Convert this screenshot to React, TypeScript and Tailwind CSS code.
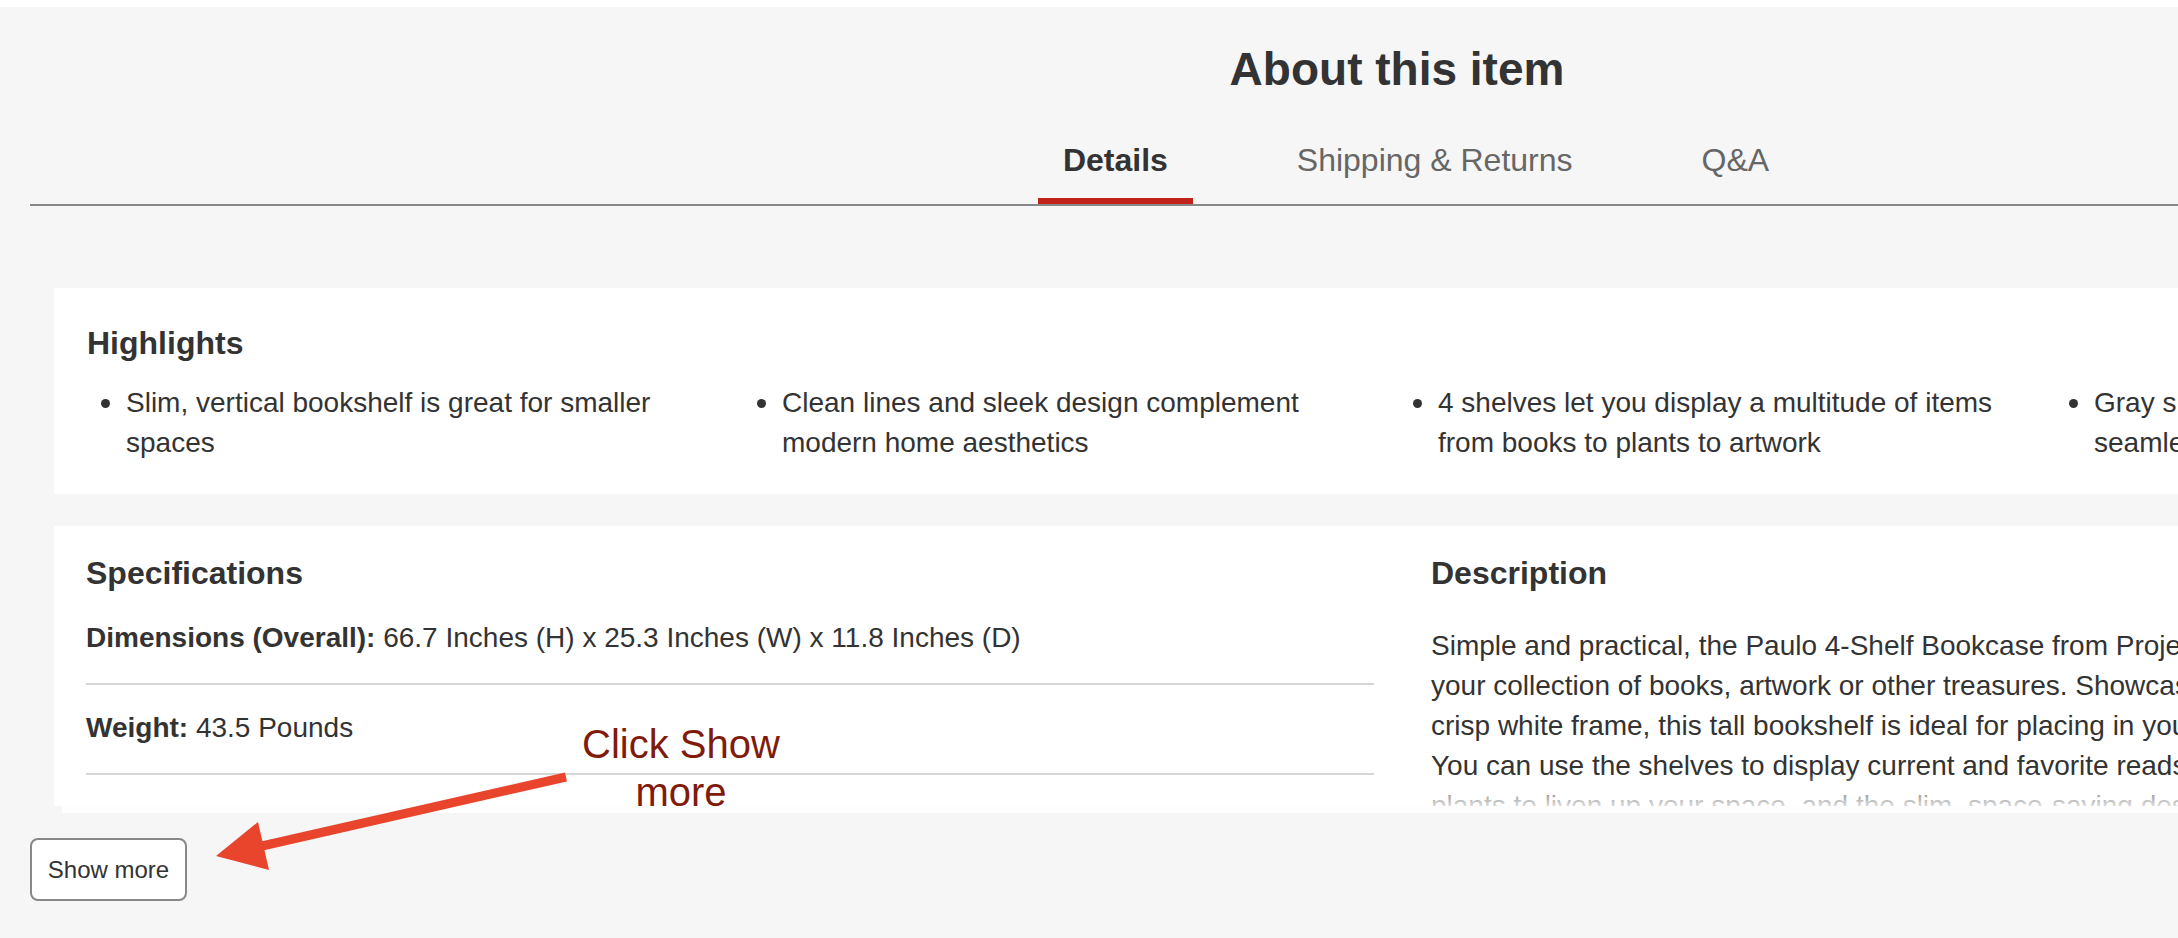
const highlights = [
  'Slim, vertical bookshelf is great for smaller spaces',
  'Clean lines and sleek design complement modern home aesthetics',
  '4 shelves let you display a multitude of items from books to plants to artwork',
  'Gray shelves and crisp white frame blend seamlessly with your décor',
];

const specs = [
  { label: 'Dimensions (Overall):', value: '66.7 Inches (H) x 25.3 Inches (W) x 11.8 Inches (D)' },
  { label: 'Weight:', value: '43.5 Pounds' },
];

const tabs = [
  { name: 'Details', active: true },
  { name: 'Shipping & Returns', active: false },
  { name: 'Q&A', active: false },
];

export default function App() {
  return (
    <div className="relative w-[2178px] h-[938px] overflow-hidden bg-white pt-[7px] font-['Liberation_Sans',Arial,sans-serif] text-[#333]">
      <div className="h-[931px] bg-[#f6f6f6] pl-[30px]">
        <div className="w-[2734px] pt-[34px]">
          {/* heading + tabs */}
          <h2 className="text-center text-[46px] leading-[56px] font-bold">About this item</h2>
          <div className="mt-[43px] flex justify-center gap-[79px] border-b-2 border-[#888] pl-[38px]">
            {tabs.map((t) => (
              <div
                key={t.name}
                className={
                  t.active
                    ? 'px-[25px] pb-[18px] border-b-[6px] border-[#c1231b] text-[32px] leading-[40px] font-bold text-[#333]'
                    : 'px-[25px] pb-[18px] border-b-[6px] border-transparent text-[32px] leading-[40px] text-[#666]'
                }
              >
                {t.name}
              </div>
            ))}
          </div>

          {/* Highlights */}
          <div className="mx-[24px] mt-[82px] bg-white pl-[33px] pt-[37px] pb-[31px]">
            <h3 className="text-[32px] leading-[36px] font-bold">Highlights</h3>
            <ul className="mt-[22px] grid grid-cols-[repeat(4,656px)]">
              {highlights.map((h) => (
                <li key={h} className="flex text-[28px] leading-[40px]">
                  <span className="w-[39px] shrink-0">
                    <span className="mt-[16px] ml-[14px] block h-[9px] w-[9px] rounded-full bg-[#333]" />
                  </span>
                  <span className="w-[580px]">{h}</span>
                </li>
              ))}
            </ul>
          </div>

          {/* Specifications / Description */}
          <div className="relative mx-[24px] mt-[32px]">
            <div className="flex h-[280px] gap-[57px] overflow-hidden bg-white pl-[32px] pt-[29px]">
              <div className="w-[1288px] shrink-0">
                <h3 className="mb-[4px] text-[32px] leading-[36px] font-bold">Specifications</h3>
                {specs.map((s) => (
                  <div key={s.label} className="border-b-2 border-[#d6d6d6] pt-[23px] pb-[25px] text-[28px] leading-[40px]">
                    <span className="font-bold">{s.label}</span> {s.value}
                  </div>
                ))}
              </div>
              <div className="w-[1300px] shrink-0">
                <h3 className="text-[32px] leading-[36px] font-bold">Description</h3>
                <p className="mt-[35px] whitespace-nowrap text-[28px] leading-[40px]">
                  Simple and practical, the Paulo 4-Shelf Bookcase from Project 62™ is a great way to show off
                  <br />
                  your collection of books, artwork or other treasures. Showcasing four open shelves and a
                  <br />
                  crisp white frame, this tall bookshelf is ideal for placing in your living room or office.
                  <br />
                  You can use the shelves to display current and favorite reads, framed photos and potted
                  <br />
                  plants to liven up your space, and the slim, space-saving design fits into smaller spaces.
                </p>
              </div>
            </div>
            <div className="absolute left-[8px] right-0 bottom-[-7px] h-[40px] bg-gradient-to-b from-white/0 to-white" />
          </div>

          <button className="mt-[32px] flex h-[63px] w-[157px] items-center justify-center rounded-[8px] border-2 border-[#888] bg-white text-[24px] text-[#333]">
            Show more
          </button>
        </div>
      </div>

      {/* annotation */}
      <div className="absolute left-[571px] top-[720px] w-[220px] text-center text-[40px] leading-[48px] text-[#801b0c]">
        Click Show more
      </div>
      <svg className="pointer-events-none absolute left-0 top-0" width="2178" height="938" viewBox="0 0 2178 938">
        <line x1="566" y1="777" x2="262" y2="846" stroke="#e8452c" strokeWidth="9" />
        <polygon points="216,856 258,822 269,870" fill="#e8452c" />
      </svg>
    </div>
  );
}
